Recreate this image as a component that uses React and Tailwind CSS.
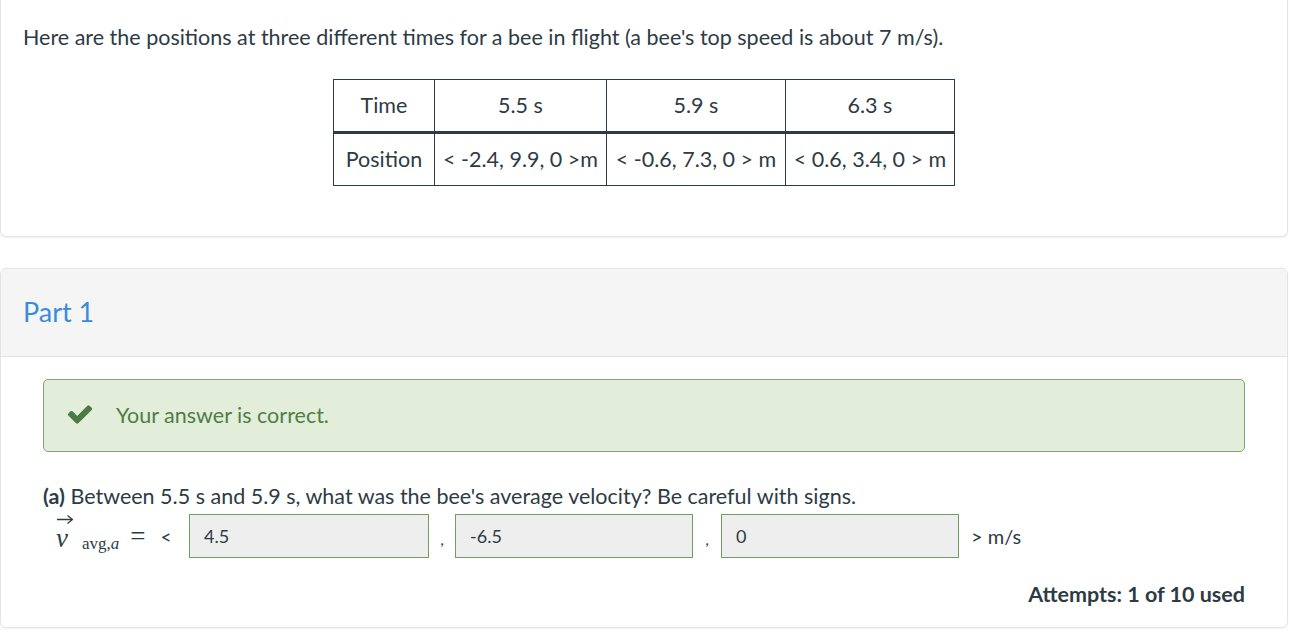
const cells = [
  ["Time", "5.5 s", "5.9 s", "6.3 s"],
  ["Position", "< -2.4, 9.9, 0 >m", "< -0.6, 7.3, 0 > m", "< 0.6, 3.4, 0 > m"],
];
const colWidths = ["w-[101px]", "w-[172px]", "w-[179px]", "w-[169px]"];

const CheckIcon = () => (
  <svg width="28" height="28" viewBox="0 0 1792 1792" className="mr-[22px] mt-[-4px]">
    <path
      fill="#4b7a42"
      d="M1671 566q0 40-28 68l-724 724-136 136q-28 28-68 28t-68-28l-136-136-362-362q-28-28-28-68t28-68l136-136q28-28 68-28t68 28l294 295 656-657q28-28 68-28t68 28l136 136q28 28 28 68z"
    />
  </svg>
);

const VecArrow = () => (
  <svg width="18" height="11" viewBox="0 0 18 11" className="absolute left-[0px] top-[-14px]">
    <path d="M1 5.5 H16" stroke="#2d3b45" strokeWidth="1.3" fill="none" />
    <path d="M11.5 1.5 L16.5 5.5 L11.5 9.5" stroke="#2d3b45" strokeWidth="1.3" fill="none" strokeLinejoin="round" />
  </svg>
);

const AnswerBox = ({ value, width }) => (
  <div
    className={`${width} h-[44px] flex items-center px-[14px] bg-[#eeeeee] border border-[#6f9d62] text-[18px] text-[#2d3b45]`}
  >
    {value}
  </div>
);

export default function App() {
  return (
    <div
      className="w-[1294px] min-h-[632px] bg-white text-[#2d3b45]"
      style={{ fontFamily: "Lato, 'Open Sans', sans-serif" }}
    >
      {/* question card */}
      <div className="w-[1288px] h-[237px] border border-t-0 border-[#e3e3e3] rounded-b-[6px] shadow-[0_1px_2px_rgba(0,0,0,0.05)] pt-[24px]">
        <p className="pl-[22px] text-[21.5px] leading-[26px]">
          Here are the positions at three different times for a bee in flight (a bee's top speed is about 7 m/s).
        </p>
        <div className="flex justify-center mt-[29px]">
          <table className="border-collapse border-[1.5px] border-[#2d3b45] text-[21.5px]">
            <tbody>
              {cells.map((row, r) => (
                <tr
                  key={r}
                  className={`h-[53px] ${r === 0 ? "border-b-[3px] border-[#2d3b45]" : ""}`}
                >
                  {row.map((c, i) => (
                    <td
                      key={i}
                      className={`${colWidths[i]} border border-[#2d3b45] text-center p-0 whitespace-nowrap`}
                    >
                      {c}
                    </td>
                  ))}
                </tr>
              ))}
            </tbody>
          </table>
        </div>
      </div>

      {/* part card */}
      <div className="w-[1288px] mt-[31px] h-[360px] border border-[#e3e3e3] rounded-[6px] shadow-[0_1px_2px_rgba(0,0,0,0.05)] overflow-hidden">
        <div className="h-[88px] bg-[#f5f5f5] border-b border-[#e3e3e3] flex items-center pl-[22px]">
          <span className="text-[27px] text-[#3b8bdb]">Part 1</span>
        </div>

        <div className="px-[42px]">
          <div className="mt-[22px] h-[73px] bg-[#e2eed9] border border-[#7fa575] rounded-[5px] flex items-center pl-[22px]">
            <CheckIcon />
            <span className="text-[21.5px] text-[#4f7d47]">Your answer is correct.</span>
          </div>

          <p className="mt-[31px] text-[21.5px] leading-[26px]">
            <span className="font-bold">(a)</span> Between 5.5 s and 5.9 s, what was the bee's average velocity? Be careful with signs.
          </p>

          <div className="mt-[5px] flex items-center h-[44px]">
            <div
              className="w-[146px] flex items-center text-[#2d3b45]"
              style={{ fontFamily: "'Liberation Serif', 'DejaVu Serif', serif" }}
            >
              <span className="relative ml-[13px] mt-[4px] italic text-[27px] leading-[20px]">
                <VecArrow />
                v
              </span>
              <span className="ml-[14px] mt-[14px] text-[17px] leading-none">
                avg,<i>a</i>
              </span>
              <span className="ml-[11px] text-[27px] leading-none">=</span>
              <span className="ml-[15px] text-[19px] leading-none" style={{ fontFamily: "Lato, sans-serif" }}>
                &lt;
              </span>
            </div>
            <AnswerBox value="4.5" width="w-[240px]" />
            <span className="w-[26px] text-center text-[16px] mt-[6px]">,</span>
            <AnswerBox value="-6.5" width="w-[238px]" />
            <span className="w-[28px] text-center text-[16px] mt-[6px]">,</span>
            <AnswerBox value="0" width="w-[238px]" />
            <span className="ml-[12px] text-[20px]">&gt; m/s</span>
          </div>

          <div className="mt-[20px] flex justify-end">
            <span className="font-bold text-[21.5px]">Attempts: 1 of 10 used</span>
          </div>
        </div>
      </div>
    </div>
  );
}
